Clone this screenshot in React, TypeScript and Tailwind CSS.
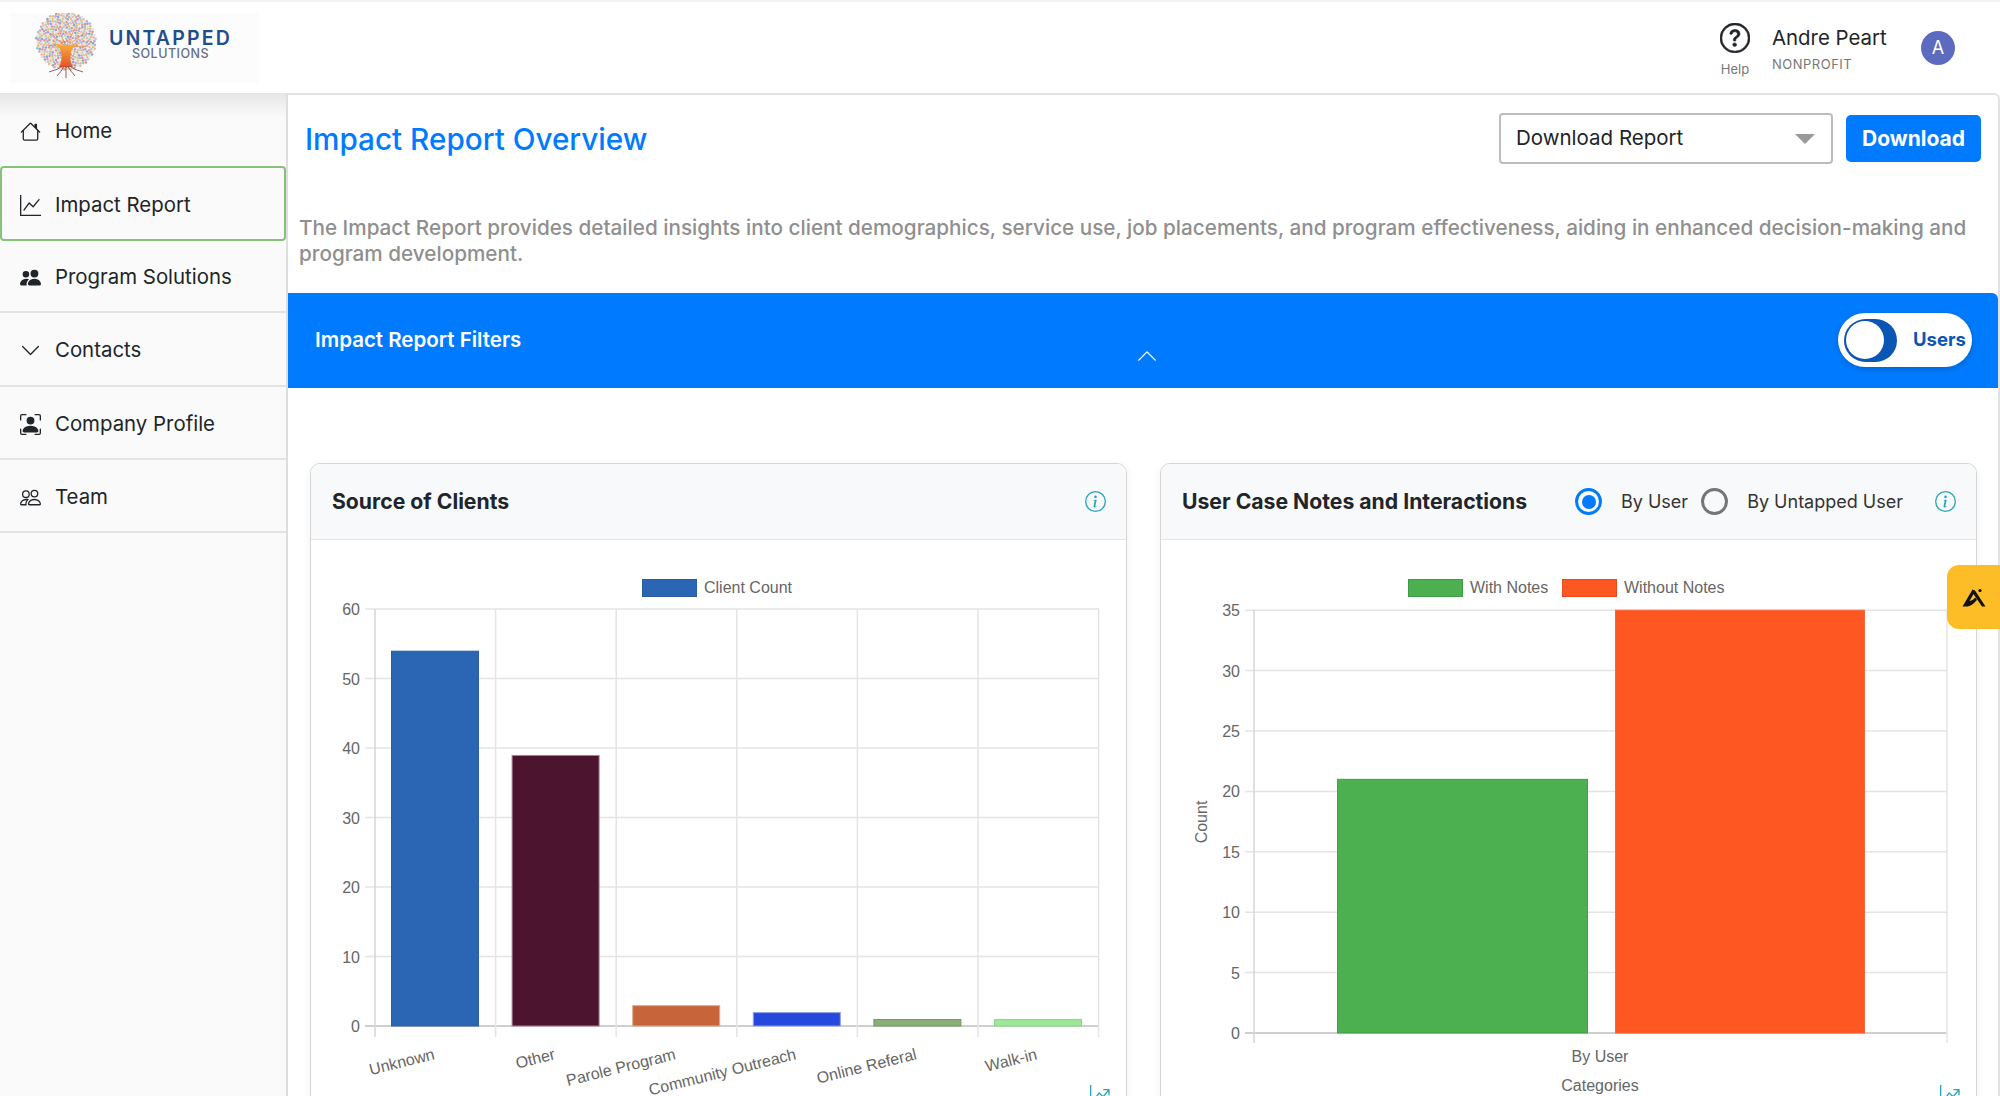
import {
  BsChevronDown,
  BsChevronUp,
  BsGraphUp,
  BsGraphUpArrow,
  BsHouse,
  BsInfoCircle,
  BsPeople,
  BsPeopleFill,
  BsPersonBoundingBox,
  BsQuestionCircle,
} from "react-icons/bs"

const navItems = [
  { label: "Home", icon: BsHouse, height: "h-[73px]" },
  { label: "Impact Report", icon: BsGraphUp, height: "h-[75px]", active: true },
  { label: "Program Solutions", icon: BsPeopleFill, height: "h-[72px]" },
  { label: "Contacts", icon: BsChevronDown, height: "h-[74px]" },
  { label: "Company Profile", icon: BsPersonBoundingBox, height: "h-[73px]" },
  { label: "Team", icon: BsPeople, height: "h-[73px]" },
]

const sourceBars = [
  { label: "Unknown", value: 54, fill: "#2b66b5", stroke: "#2a5c9f" },
  { label: "Other", value: 39, fill: "#4d142f", stroke: "#a9808f" },
  { label: "Parole Program", value: 3, fill: "#c8643a", stroke: "#dba893" },
  { label: "Community Outreach", value: 2, fill: "#2549dd", stroke: "#8f9fe6" },
  { label: "Online Referal", value: 1, fill: "#8ab078", stroke: "#6f9a5f" },
  { label: "Walk-in", value: 1, fill: "#9ce898", stroke: "#8ad687" },
]

const chartText = { fontFamily: "'Liberation Sans', Arial, sans-serif", fontSize: 16, fill: "#666" }
const grid = "#e4e4e4"

// dots of the tree crown, fixed so the logo stays the same on every render
const crownColors = ["#e8755a", "#7fb2d9", "#e8b04a", "#9bc9a5", "#c98bb9", "#6a93c9", "#dcdcdc", "#f0a58f", "#e0e0e0"]
const crownDots = Array.from({ length: 420 }, (_, i) => {
  const angle = i * 2.39996
  const r = 30 * Math.sqrt((i + 0.5) / 420)
  return { x: 66 + r * Math.cos(angle), y: 40 + r * Math.sin(angle) * 0.97, color: crownColors[(i * 5) % 9] }
})

function Logo() {
  return (
    <div className="ml-[10px] flex h-[70px] w-[248px] items-center bg-[#fcfcfd]">
      <svg width="99" height="70" viewBox="10 12 99 70" className="shrink-0">
        <defs>
          <linearGradient id="trunk" x1="0" y1="0" x2="0" y2="1">
            <stop offset="0" stopColor="#f7b23c" />
            <stop offset="1" stopColor="#e9502a" />
          </linearGradient>
        </defs>
        {crownDots.map((d, i) => (
          <circle key={i} cx={d.x} cy={d.y} r="1.3" fill={d.color} opacity="0.8" />
        ))}
        <path d="M66 46 L50 32 M66 46 L46 44 M66 46 L57 24 M66 46 L76 25 M66 46 L83 33 M66 46 L88 45" stroke="#e87a50" strokeWidth="0.9" fill="none" opacity="0.75" />
        <path d="M53 42 C59 45 60 47 61 52 C62 57 62 60 59 66 L73 66 C70 60 70 57 71 52 C72 47 73 45 79 42 C73 43 70 44 66 45 C62 44 59 43 53 42 Z" fill="url(#trunk)" />
        <path d="M62 65 C58 69 54 69 49 71 M64 65 C62 70 60 71 57 75 M66 65 L66 77 M68 65 C70 70 72 71 75 75 M70 65 C74 69 78 69 83 71" stroke="#7d4a48" strokeWidth="0.9" fill="none" />
      </svg>
      <div className="-mt-[5px] flex w-[123px] flex-col items-center font-['Inter',sans-serif] leading-none">
        <span className="whitespace-nowrap text-[19.5px] font-semibold leading-[18px] tracking-[2.2px] text-[#1f4e8c]">UNTAPPED</span>
        <span className="whitespace-nowrap text-[12.5px] font-medium leading-[14px] tracking-[0.5px] text-[#646f85]">SOLUTIONS</span>
      </div>
    </div>
  )
}

function Sidebar() {
  return (
    <aside className="relative w-[288px] shrink-0 border-r-2 border-[#dedede] bg-[#fafafa]">
      <div className="absolute inset-x-0 top-0 h-[24px] bg-gradient-to-b from-[#e6e6e6] to-transparent" />
      {navItems.map((item) => (
        <div
          key={item.label}
          className={`relative flex items-center gap-[14px] pt-[3px] text-[20.4px] text-[#212529] ${item.height} ${
            item.active
              ? "rounded-[4px] border-2 border-[#86c27a] pl-[18px]"
              : item.label === "Home"
                ? "pl-[20px]"
                : "border-b-2 border-[#e3e3e3] pl-[20px]"
            }`}
        >
          <item.icon className="h-[21px] w-[21px]" />
          <span>{item.label}</span>
        </div>
      ))}
    </aside>
  )
}

function InfoIcon() {
  return <BsInfoCircle className="h-[21px] w-[21px] text-[#2aa3bd]" />
}

function SourceChart() {
  const zero = 1026
  const unit = 6.95
  return (
    <svg width="815" height="556" viewBox="311 540 815 556" className="block">
      <rect x="642.5" y="579.5" width="54" height="17" fill="#2b66b5" stroke="#2a5c9f" />
      <text x="704" y="593" {...chartText}>Client Count</text>
      {[0, 10, 20, 30, 40, 50, 60].map((v) => (
        <g key={v}>
          <line x1="365" x2="1099" y1={zero - v * unit} y2={zero - v * unit} stroke={v === 0 ? "#cfcfcf" : grid} strokeWidth={v === 0 ? 2 : 1.5} />
          <text x="360" y={zero - v * unit + 6} textAnchor="end" {...chartText}>{v}</text>
        </g>
      ))}
      {[0, 1, 2, 3, 4, 5, 6].map((i) => (
        <line key={i} x1={375 + i * 120.6} x2={375 + i * 120.6} y1="609" y2="1037" stroke={i === 0 ? "#d6d6d6" : grid} strokeWidth="1.5" />
      ))}
      {sourceBars.map((bar, i) => {
        const x = 391.5 + i * 120.6
        const y = zero - bar.value * unit
        const end = 435.5 + i * 120.5
        return (
          <g key={bar.label}>
            <rect x={x} y={y + 0.5} width="87" height={zero - y - 0.5} fill={bar.fill} stroke={bar.stroke} strokeWidth="1" />
            <text x={end} y="1059" textAnchor="end" transform={`rotate(-14 ${end} 1059)`} {...chartText}>{bar.label}</text>
          </g>
        )
      })}
    </svg>
  )
}

function NotesChart() {
  const zero = 1033
  const unit = 12.08
  return (
    <svg width="815" height="556" viewBox="1161 540 815 556" className="block">
      <rect x="1408.5" y="579.5" width="54" height="17" fill="#4caf50" stroke="#3f9a45" />
      <text x="1470" y="593" {...chartText}>With Notes</text>
      <rect x="1562.5" y="579.5" width="54" height="17" fill="#ff5722" stroke="#e64a19" />
      <text x="1624" y="593" {...chartText}>Without Notes</text>
      {[0, 5, 10, 15, 20, 25, 30, 35].map((v) => (
        <g key={v}>
          <line x1="1245" x2="1947" y1={zero - v * unit} y2={zero - v * unit} stroke={v === 0 ? "#cfcfcf" : grid} strokeWidth={v === 0 ? 2 : 1.5} />
          <text x="1240" y={zero - v * unit + 6} textAnchor="end" {...chartText}>{v}</text>
        </g>
      ))}
      <line x1="1254" x2="1254" y1="610" y2="1043" stroke="#d6d6d6" strokeWidth="1.5" />
      <line x1="1947" x2="1947" y1="610" y2="1043" stroke={grid} strokeWidth="1.5" />
      <rect x="1337.5" y={zero - 21 * unit} width="250" height={21 * unit} fill="#4caf50" stroke="#43a047" />
      <rect x="1615.5" y={zero - 35 * unit} width="249" height={35 * unit} fill="#ff5722" stroke="#f4673c" />
      <text x="1600" y="1062" textAnchor="middle" {...chartText}>By User</text>
      <text x="1600" y="1091" textAnchor="middle" {...chartText}>Categories</text>
      <text x="1207" y="822" textAnchor="middle" transform="rotate(-90 1207 822)" {...chartText}>Count</text>
    </svg>
  )
}

function Radio({ checked, label }: { checked?: boolean; label: string }) {
  return (
    <div className="flex items-center gap-[19px]">
      <span
        className={`flex h-[27px] w-[27px] items-center justify-center rounded-full border-[3px] ${
          checked ? "border-[#007bff]" : "border-[#757575]"
        }`}
      >
        {checked && <span className="h-[14px] w-[14px] rounded-full bg-[#007bff]" />}
      </span>
      <span className="text-[18px] text-[#333]">{label}</span>
    </div>
  )
}

function Card({ title, actions, children }: { title: string; actions?: React.ReactNode; children: React.ReactNode }) {
  return (
    <section className="relative h-[640px] w-[817px] overflow-hidden rounded-t-[10px] border border-[#d5d5d5] shadow-[0_2px_10px_rgba(0,0,0,0.06)]">
      <div className="flex h-[76px] items-center justify-between border-b border-[#e6e6e6] bg-[#f8f9fa] pl-[21px] pr-[20px]">
        <h2 className="text-[21.2px] font-bold text-[#212529]">{title}</h2>
        <div className="flex items-center">
          {actions}
          <InfoIcon />
        </div>
      </div>
      {children}
      <BsGraphUpArrow className="absolute right-[15px] top-[621px] h-[21px] w-[21px] text-[#2aa3bd]" />
    </section>
  )
}

export default function App() {
  return (
    <div className="relative h-[1096px] w-[2000px] overflow-hidden bg-white font-['Inter',sans-serif]">
      <header className="flex h-[93px] items-center justify-between border-t-2 border-[#f2f2f2] bg-white">
        <Logo />
        <div className="flex items-center">
          <div className="mr-[22px] flex flex-col items-center pt-[4px]">
            <BsQuestionCircle className="h-[30px] w-[30px] stroke-[0.3] text-[#212529]" />
            <span className="mt-[10px] text-[13px] leading-none text-[#777]">Help</span>
          </div>
          <div className="mr-[35px] flex w-[114px] flex-col">
            <span className="whitespace-nowrap text-[20.4px] leading-[26px] text-[#212529]">Andre Peart</span>
            <span className="mt-[7px] text-[13px] leading-none tracking-[0.5px] text-[#777]">NONPROFIT</span>
          </div>
          <div className="mr-[45px] flex h-[34px] w-[34px] items-center justify-center rounded-full bg-[#5c6bc0] text-[18px] text-white">
            A
          </div>
        </div>
      </header>

      <div className="flex">
        <Sidebar />
        <main className="min-w-0 flex-1 rounded-tr-[6px] border-r-2 border-t-2 border-[#e2e2e2]">
          <div className="flex h-[87px] items-center justify-between pl-[17px] pr-[17px]">
            <h1 className="pt-[2px] text-[29.7px] font-medium text-[#007bff]">Impact Report Overview</h1>
            <div className="flex items-center gap-[13px]">
              <div className="flex h-[51px] w-[334px] items-center justify-between rounded-[4px] border-2 border-[#bdbdbd] pl-[15px] pr-[16px] text-[20.5px] text-[#212529]">
                Download Report
                <span className="h-0 w-0 border-x-[10px] border-t-[10px] border-x-transparent border-t-[#999]" />
              </div>
              <button className="h-[47px] w-[135px] rounded-[5px] bg-[#007bff] text-[21px] font-bold text-white">Download</button>
            </div>
          </div>

          <p className="pl-[11px] pr-[20px] pt-[33px] text-[20.7px] font-medium leading-[26px] text-[#8f8f8f]">
            The Impact Report provides detailed insights into client demographics, service use, job placements, and program effectiveness, aiding in enhanced decision-making and program development.
          </p>

          <div className="relative mt-[26px] flex h-[95px] items-center justify-between rounded-tr-[6px] bg-[#007bff] pl-[27px] pr-[26px]">
            <span className="text-[20.5px] font-semibold text-white">Impact Report Filters</span>
            <BsChevronUp className="absolute left-[848px] top-[52px] h-[22px] w-[22px] text-white" />
            <div className="-mt-[1px] flex h-[54px] w-[134px] items-center rounded-full bg-white pl-[6px] shadow-[0_2px_6px_rgba(0,0,0,0.2)]">
              <div className="flex h-[43px] w-[53px] items-center rounded-full bg-[#0a56b5] pl-[2px]">
                <span className="h-[38px] w-[38px] rounded-full bg-white" />
              </div>
              <span className="ml-[16px] text-[18.5px] font-bold text-[#0a56b5]">Users</span>
            </div>
          </div>

          <div className="mt-[75px] flex gap-[33px] pl-[22px]">
            <Card title="Source of Clients">
              <SourceChart />
            </Card>
            <Card
              title="User Case Notes and Interactions"
              actions={
                <div className="mr-[32px] flex items-center gap-[13px]">
                  <Radio checked label="By User" />
                  <Radio label="By Untapped User" />
                </div>
              }
            >
              <NotesChart />
            </Card>
          </div>
        </main>
      </div>

      {/* Floating badge */}
      <div className="absolute right-0 top-[565px] flex h-[64px] w-[53px] items-center justify-center rounded-l-[12px] bg-[#fdbd27]">
        <svg width="24" height="19" viewBox="0 0 24 19">
          <path d="M0.5 18.5 L10.5 1.5 L13 2.5 L23.5 18.5 L20 18.5 L11.5 6 L7.5 13 C10 12.5 12 11 13.5 9.5 L15 12 C12 15 9.5 18 5 18.5 Z" fill="#111" />
          <circle cx="18" cy="2.5" r="1.6" fill="#111" />
        </svg>
      </div>
    </div>
  )
}
